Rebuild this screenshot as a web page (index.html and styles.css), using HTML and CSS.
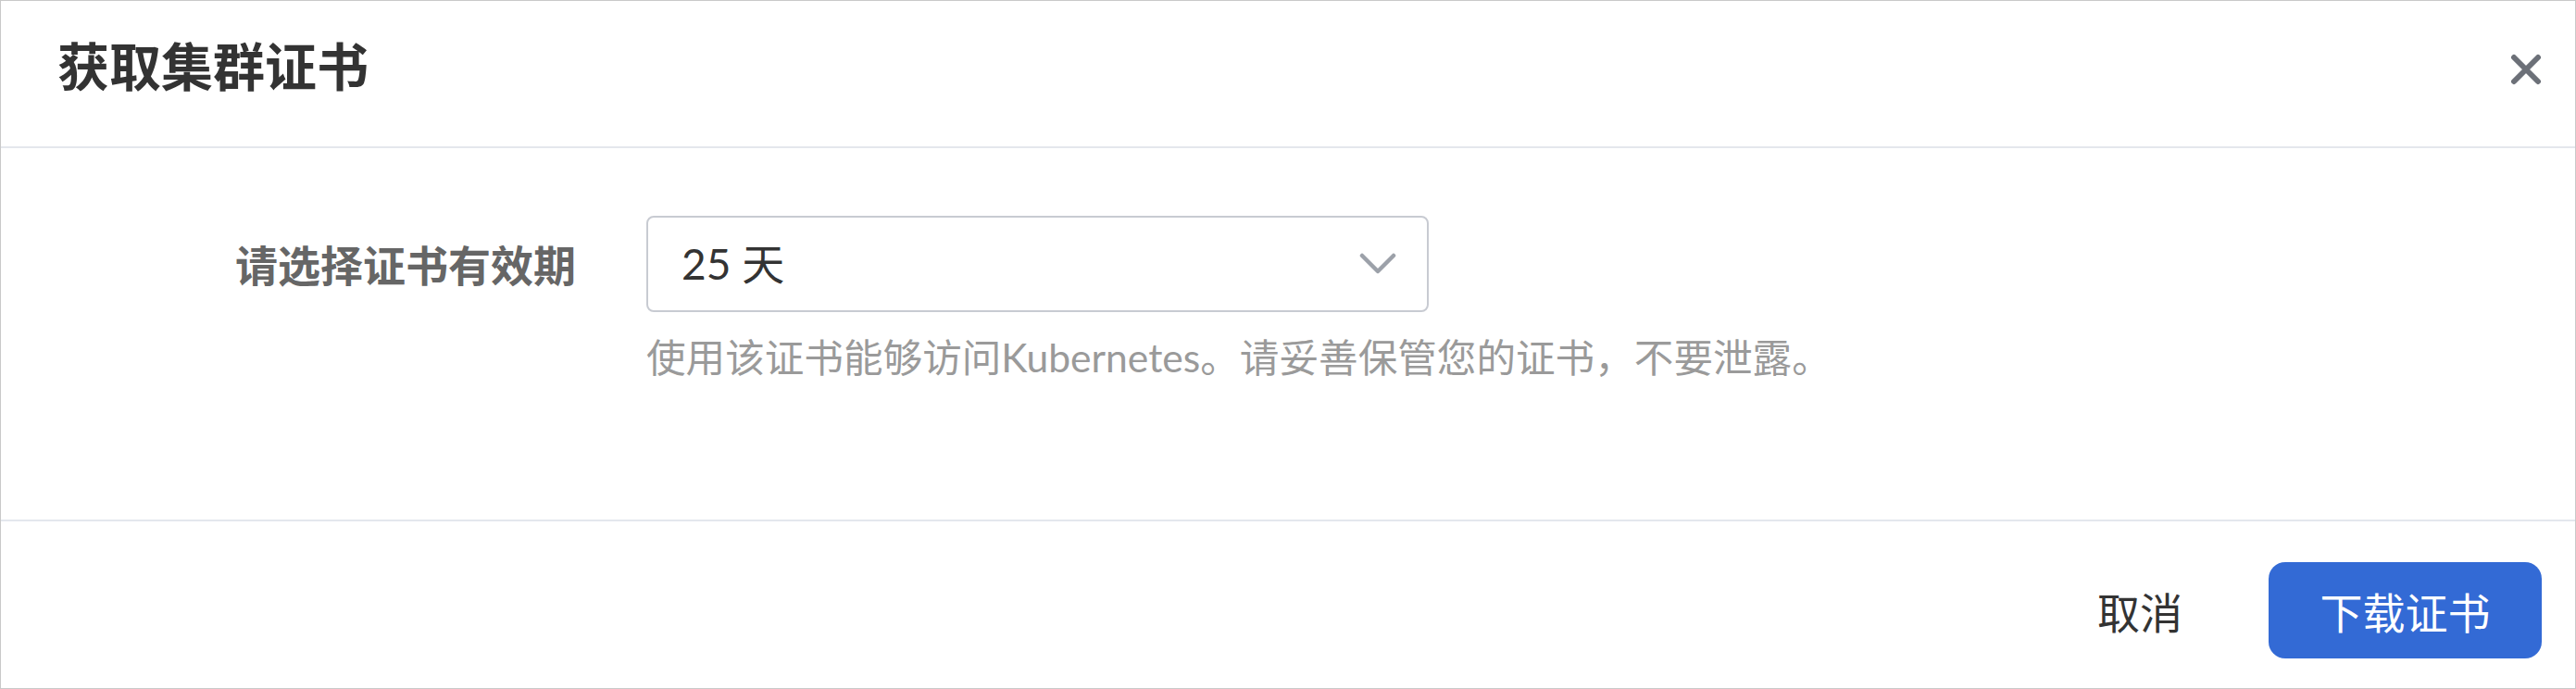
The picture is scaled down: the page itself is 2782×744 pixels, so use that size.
FILE: index.html
```html
<!DOCTYPE html>
<html lang="zh-CN">
<head>
<meta charset="utf-8">
<title>获取集群证书</title>
<link rel="stylesheet" href="styles.css">
</head>
<body>
<div class="modal">
  <div class="modal-header">
    <div class="modal-title">获取集群证书</div>
    <svg class="close" width="34" height="34" viewBox="0 0 34 34">
      <path d="M4 4 L30 30 M30 4 L4 30" stroke="#6c7078" stroke-width="6" stroke-linecap="round" fill="none"/>
    </svg>
  </div>
  <div class="modal-body">
    <div class="form-label">请选择证书有效期</div>
    <div class="select">
      <span class="select-value">25 天</span>
      <svg class="chevron" width="40" height="24" viewBox="0 0 40 24">
        <polyline points="3,3 20,20 37,3" stroke="#9ca1a9" stroke-width="4.5" stroke-linecap="round" stroke-linejoin="round" fill="none"/>
      </svg>
    </div>
    <div class="hint">使用该证书能够访问Kubernetes。请妥善保管您的证书，不要泄露。</div>
  </div>
  <div class="modal-footer">
    <span class="btn-cancel">取消</span>
    <button class="btn-primary">下载证书</button>
  </div>
</div>
</body>
</html>
```
FILE: styles.css
```css
html, body {
  margin: 0;
  padding: 0;
  background: #ffffff;
}
body {
  font-family: "Lato", "Noto Sans CJK SC", sans-serif;
}
.modal {
  width: 2782px;
  height: 744px;
  box-sizing: border-box;
  border: 1px solid #c9c9c9;
  display: flex;
  flex-direction: column;
  background: #fff;
}
.modal-header {
  height: 159px;
  box-sizing: border-box;
  border-bottom: 2px solid #e4e7ed;
  display: flex;
  justify-content: space-between;
  align-items: flex-start;
  padding: 0 36px 0 61px;
}
.modal-title {
  font-family: "Noto Sans CJK SC", sans-serif;
  font-weight: 700;
  font-size: 56px;
  line-height: 56px;
  color: #333333;
  margin-top: 40px;
}
.close {
  margin-top: 57px;
}
.modal-body {
  flex: 1;
  display: grid;
  grid-template-columns: 621px 845px;
  column-gap: 76px;
  align-content: start;
  align-items: center;
  padding-top: 73px;
}
.form-label {
  font-family: "Noto Sans CJK SC", sans-serif;
  font-weight: 700;
  font-size: 46px;
  line-height: 46px;
  color: #666666;
  text-align: right;
  margin-top: -3px;
}
.select {
  box-sizing: border-box;
  height: 104px;
  border: 2px solid #c8cbd2;
  border-radius: 8px;
  display: flex;
  align-items: center;
  justify-content: space-between;
  padding: 0 33px 0 36px;
}
.select-value {
  font-size: 46px;
  line-height: 46px;
  color: #333333;
}
.chevron {
  display: block;
}
.hint {
  grid-column: 2;
  margin-top: 28px;
  font-size: 42.6px;
  line-height: 42px;
  color: #9a9a9a;
  white-space: nowrap;
}
.modal-footer {
  height: 182px;
  box-sizing: border-box;
  border-top: 2px solid #e4e7ed;
  display: flex;
  justify-content: flex-end;
  align-items: flex-start;
  padding: 44px 36px 0 0;
}
.btn-cancel {
  font-family: "Noto Sans CJK SC", sans-serif;
  font-size: 46px;
  line-height: 104px;
  color: #333333;
  margin-right: 93px;
}
.btn-primary {
  width: 295px;
  height: 104px;
  border: none;
  border-radius: 18px;
  background: #336ad5;
  color: #ffffff;
  font-family: "Noto Sans CJK SC", sans-serif;
  font-size: 46px;
  line-height: 104px;
  padding: 0;
}
```
